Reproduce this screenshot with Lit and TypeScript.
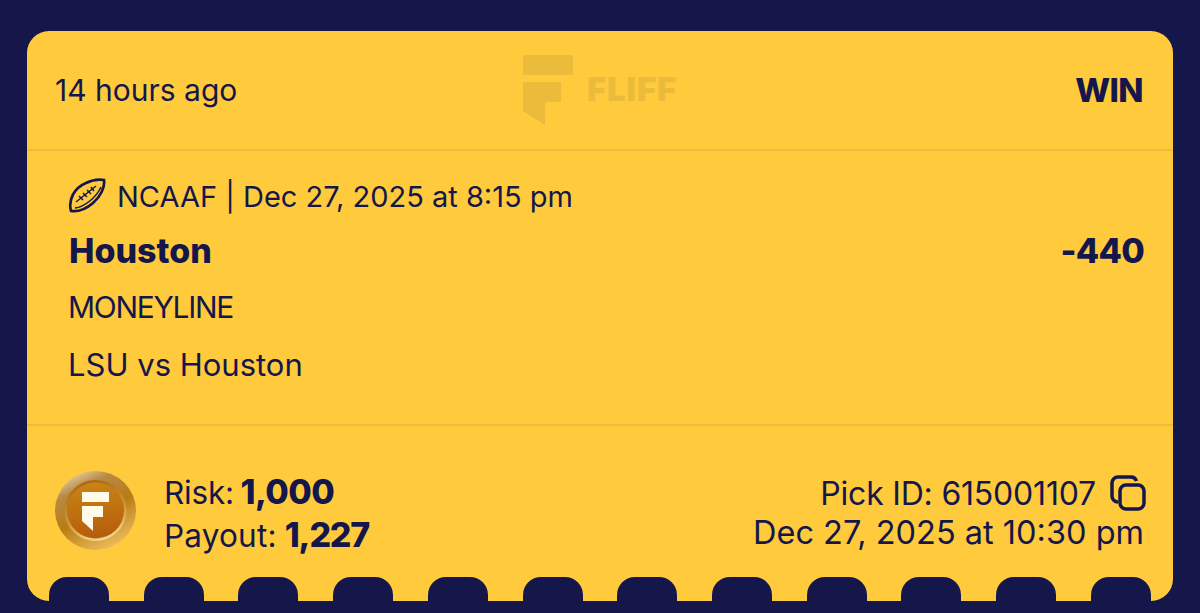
import { LitElement, html, css, svg } from 'lit';
import { customElement } from 'lit/decorators.js';

const NOTCHES = Array.from({ length: 12 });

@customElement('app-root')
export class AppRoot extends LitElement {
  static styles = css`
    :host {
      display: block;
      height: 613px;
      box-sizing: border-box;
      padding: 31px 27px 12px;
      background: #15174a;
      color: #15174a;
      font-family: 'Inter', 'Liberation Sans', sans-serif;
      overflow: hidden;
    }
    .card {
      height: 570px;
      display: flex;
      flex-direction: column;
      background: #ffcb3d;
      border-radius: 22px;
      overflow: hidden;
    }
    .head {
      height: 120px;
      box-sizing: border-box;
      flex: none;
      display: grid;
      grid-template-columns: 1fr auto 1fr;
      align-items: center;
      padding: 0 30px 0 28px;
      border-bottom: 2px solid #edbd3e;
    }
    .ago {
      font-size: 30px;
    }
    .win {
      justify-self: end;
      font-size: 33px;
      font-weight: 800;
      letter-spacing: -0.6px;
    }
    .mark {
      display: flex;
      align-items: center;
      gap: 12px;
      width: 154px;
      margin-left: 2px;
    }
    .mark svg {
      display: block;
      flex: none;
    }
    .mark span {
      font-size: 33px;
      line-height: 1;
      font-weight: 900;
      color: #ebbb3c;
      letter-spacing: 0.8px;
      margin-top: -2px;
    }
    .pick {
      height: 275px;
      flex: none;
      box-sizing: border-box;
      padding: 27px 29px 0 41px;
      border-bottom: 2px solid #edbd3e;
    }
    .league {
      display: flex;
      align-items: center;
      gap: 11px;
      height: 36px;
      font-size: 29px;
    }
    .league svg {
      flex: none;
      display: block;
    }
    .team {
      display: flex;
      justify-content: space-between;
      align-items: center;
      height: 42px;
      margin-top: 15px;
      padding-left: 1px;
      font-size: 34px;
      font-weight: 800;
    }
    .odds {
      letter-spacing: -0.7px;
    }
    .market,
    .game {
      font-size: 31px;
      line-height: 36px;
    }
    .market {
      margin-top: 18px;
      font-size: 30px;
      letter-spacing: -1.3px;
    }
    .game {
      margin-top: 22px;
    }
    .foot {
      flex: 1;
      display: flex;
      align-items: flex-start;
      padding: 45px 29px 0 28px;
    }
    .coin {
      display: block;
      flex: none;
      margin-right: 28px;
    }
    .lines {
      font-size: 31.5px;
      line-height: 42px;
      letter-spacing: -0.2px;
    }
    .lines b {
      font-size: 34px;
      font-weight: 800;
      letter-spacing: -0.6px;
    }
    .risk b {
      margin-left: -2px;
    }
    .payout {
      letter-spacing: 0.2px;
    }
    .lines .payout b {
      margin-left: -1px;
      letter-spacing: -1.2px;
    }
    .meta {
      margin-left: auto;
      margin-top: 3px;
      line-height: 39px;
      text-align: right;
    }
    .id {
      display: flex;
      justify-content: flex-end;
      align-items: center;
      gap: 14px;
      font-size: 32px;
    }
    .id svg {
      display: block;
      margin: -2px -2px 0 0;
    }
    .date {
      font-size: 32.5px;
      letter-spacing: 0;
    }
    .notches {
      flex: none;
      height: 24px;
      display: flex;
      justify-content: space-between;
      padding: 0 22px;
    }
    .notches i {
      width: 60px;
      background: #15174a;
      border-radius: 18px 18px 0 0;
    }
  `;

  private renderMark() {
    return html`<svg width="52" height="72" viewBox="0 0 52 72" aria-hidden="true">
      <path fill="#ebbb3c" d="M0 1h50v20H0zM0 28h38v20H22v23L0 57z" />
    </svg>`;
  }

  private renderBall() {
    return html`<svg width="38" height="36" viewBox="0 0 38 36" fill="none" stroke="#15174a" aria-hidden="true">
      <path stroke-width="2.700" d="M3 33C0 22 6 10 18 5c6-3 13-4 18-3 1 7-3 16-11 23-7 6-15 9-22 8Z" />
      <path stroke-width="1.500" d="M8 24 28 8" />
      <path stroke-width="1.500" d="M11 18l4 4M15 15l4 4M19 12l4 4M23 9l3 4" />
      <path stroke-width="1.500" d="M7 30c9-1 21-10 26-21" />
    </svg>`;
  }

  private renderCoin() {
    return svg`<svg class="coin" width="81" height="79" viewBox="0 0 81 79" aria-hidden="true">
      <defs>
        <linearGradient id="rim" x1="0.2" y1="0" x2="0.7" y2="1">
          <stop offset="0" stop-color="#ecd6ae" />
          <stop offset="0.22" stop-color="#b98a45" />
          <stop offset="0.55" stop-color="#b97c14" />
          <stop offset="1" stop-color="#eec060" />
        </linearGradient>
        <linearGradient id="ring" x1="0.3" y1="0" x2="0.6" y2="1">
          <stop offset="0" stop-color="#a8660f" />
          <stop offset="0.6" stop-color="#d19a3c" />
          <stop offset="1" stop-color="#f5d890" />
        </linearGradient>
        <linearGradient id="face" x1="0.4" y1="0" x2="0.5" y2="1">
          <stop offset="0" stop-color="#c98414" />
          <stop offset="1" stop-color="#b65c0c" />
        </linearGradient>
      </defs>
      <ellipse cx="40.500" cy="39.500" rx="40.500" ry="39.500" fill="url(#rim)" />
      <ellipse cx="40.500" cy="39.500" rx="31" ry="30.500" fill="url(#ring)" />
      <ellipse cx="40.500" cy="39.500" rx="28.500" ry="28" fill="url(#face)" />
      <path fill="#fffbe8" d="M27 21h27v10H27zM27 35h21v11H38v14L27 50z" />
    </svg>`;
  }

  render() {
    return html`
      <div class="card">
        <div class="head">
          <div class="ago">14 hours ago</div>
          <div class="mark">${this.renderMark()}<span>FLIFF</span></div>
          <div class="win">WIN</div>
        </div>
        <div class="pick">
          <div class="league">${this.renderBall()}NCAAF | Dec 27, 2025 at 8:15 pm</div>
          <div class="team"><span>Houston</span><span class="odds">-440</span></div>
          <div class="market">MONEYLINE</div>
          <div class="game">LSU vs Houston</div>
        </div>
        <div class="foot">
          ${this.renderCoin()}
          <div class="lines">
            <div class="risk">Risk: <b>1,000</b></div>
            <div class="payout">Payout: <b>1,227</b></div>
          </div>
          <div class="lines meta">
            <div class="id">
              <span>Pick ID: 615001107</span>
              <svg width="36" height="36" viewBox="0 0 36 36" fill="none" stroke="#15174a" stroke-width="3.500" aria-hidden="true">
                <rect x="10" y="10" width="24" height="24" rx="6" />
                <path d="M8 27a6 6 0 0 1-6-6V8a6 6 0 0 1 6-6h13a6 6 0 0 1 5.500 4" />
              </svg>
            </div>
            <div class="date">Dec 27, 2025 at 10:30 pm</div>
          </div>
        </div>
        <div class="notches">${NOTCHES.map(() => html`<i></i>`)}</div>
      </div>
    `;
  }
}
